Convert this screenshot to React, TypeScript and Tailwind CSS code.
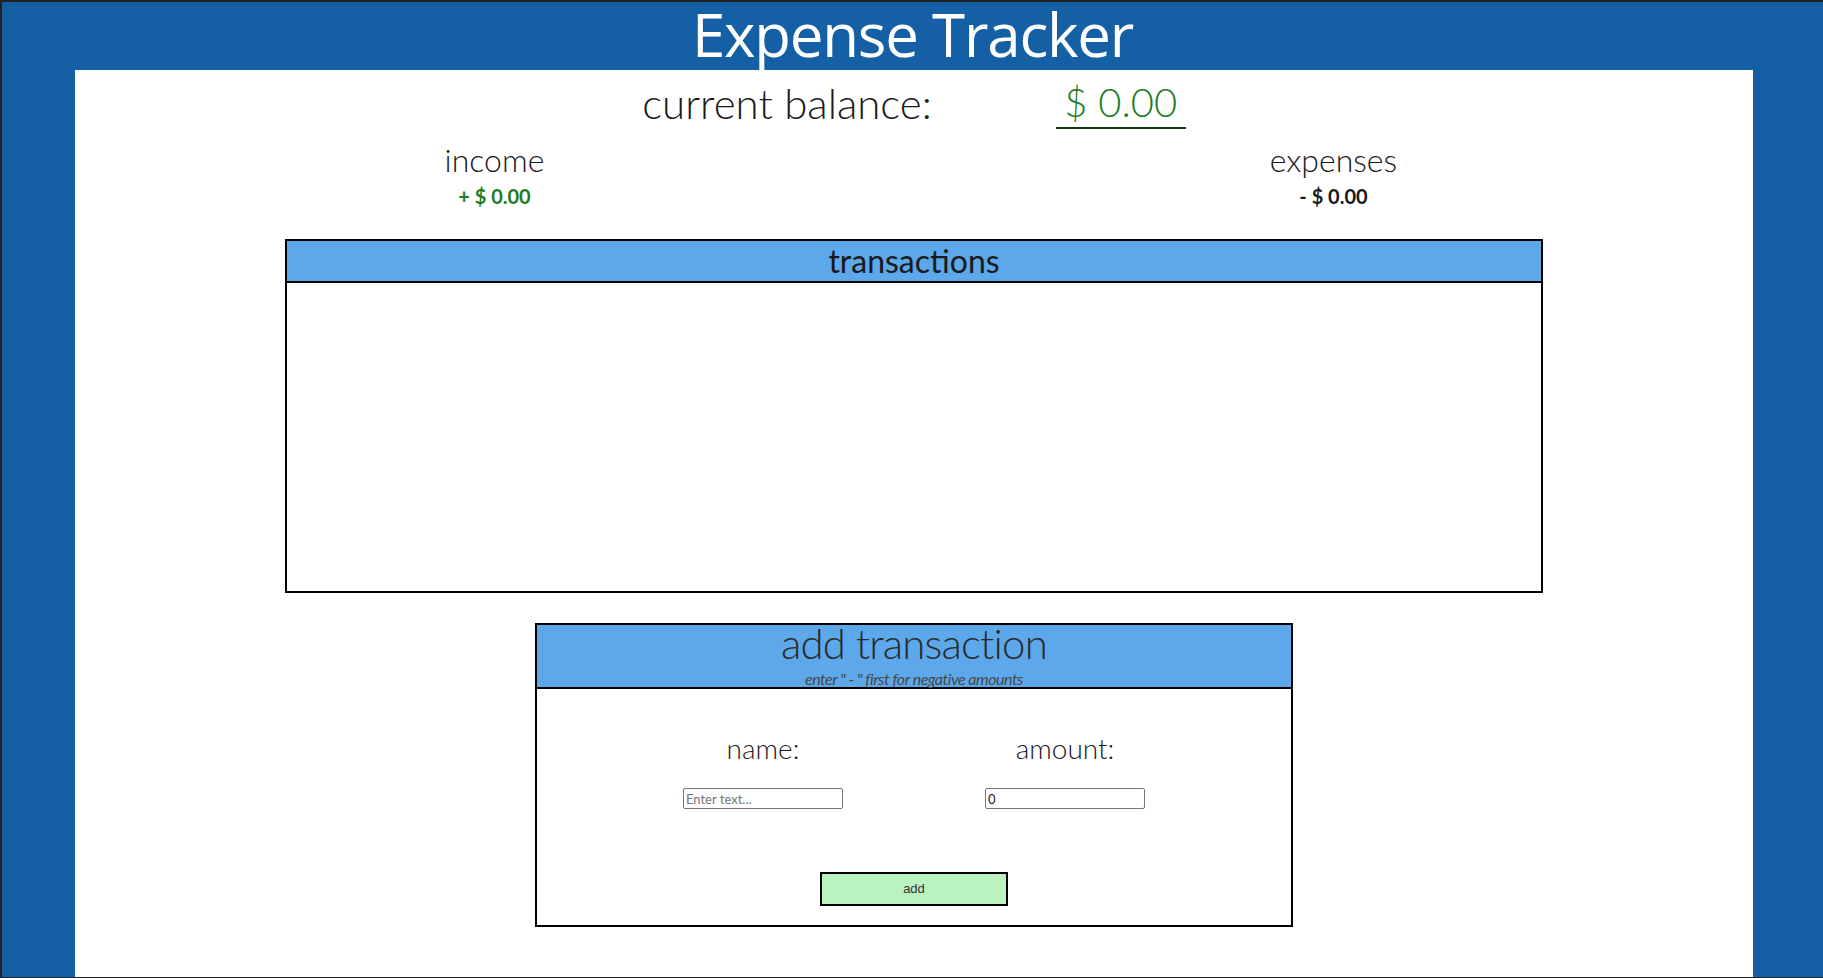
import { useState } from "react";

export default function App() {
  // form state for the add transaction panel
  const [name, setName] = useState("");
  const [amount, setAmount] = useState("0");

  return (
    <div className="h-[978px] flex flex-col bg-[#1560a4] border-t-2 border-l-2 border-b border-[#222222] overflow-hidden">
      {/* Title */}
      <h1 className="relative z-10 h-[68px] shrink-0 text-center text-white text-[60px] leading-[64px] tracking-[-0.02em] font-['Open_Sans',sans-serif]">
        Expense Tracker
      </h1>

      <main className="flex-1 bg-white ml-[73px] mr-[70px] pt-[12px] text-[#1a1a1a] font-['Lato',sans-serif]">
        {/* Balance */}
        <div className="flex justify-center items-start">
          <p className="text-[42px] leading-[42px] font-light">current balance:</p>
          <div className="ml-[124px] -mt-[1px] w-[130px] h-[48px] border-b-2 border-[#0b3d0b] text-center text-[40px] leading-[42px] font-light text-[#1d7d24]">
            $ 0.00
          </div>
        </div>

        {/* Income / Expenses */}
        <div className="grid grid-cols-2 mt-[15px]">
          <div className="flex flex-col items-center">
            <p className="text-[32px] leading-[32px] font-light">income</p>
            <p className="mt-[10px] text-[20px] leading-[20px] font-bold text-[#1d7d24]">+ $ 0.00</p>
          </div>
          <div className="flex flex-col items-center">
            <p className="text-[32px] leading-[32px] font-light">expenses</p>
            <p className="mt-[10px] text-[20px] leading-[20px] font-bold">- $ 0.00</p>
          </div>
        </div>

        {/* Transactions list */}
        <section className="w-3/4 mx-auto mt-[33px] h-[354px] border-2 border-black flex flex-col">
          <div className="h-[42px] border-b-2 border-black bg-[#5ca8ea] flex items-center justify-center">
            <h2 className="text-[32px] leading-[32px]">transactions</h2>
          </div>
          <ul className="flex-1"></ul>
        </section>

        {/* Add transaction */}
        <section className="w-[758px] mx-auto mt-[30px] h-[304px] border-2 border-black flex flex-col">
          <div className="h-[64px] border-b-2 border-black bg-[#5ca8ea] flex flex-col items-center">
            <h2 className="text-[42px] leading-[36px] font-light tracking-[-0.02em] text-[#2b2b2b]">
              add transaction
            </h2>
            <p className="mt-[10px] text-[16px] leading-[15px] italic tracking-[-0.03em] text-[#474747]">
              enter " - " first for negative amounts
            </p>
          </div>

          <div className="flex justify-center gap-[142px] pt-[45px]">
            <label className="w-[160px] flex flex-col items-center">
              <span className="text-[28px] leading-[28px] font-light">name:</span>
              <input
                type="text"
                value={name}
                onChange={(e) => setName(e.target.value)}
                placeholder="Enter text..."
                className="mt-[26px] w-[160px] h-[21px] px-[2px] border border-[#767676] rounded-[2px] text-[13px] text-[#1a1a1a] placeholder:text-[#757575]"
              />
            </label>
            <label className="w-[160px] flex flex-col items-center">
              <span className="text-[28px] leading-[28px] font-light">amount:</span>
              <input
                type="text"
                value={amount}
                onChange={(e) => setAmount(e.target.value)}
                className="mt-[26px] w-[160px] h-[21px] px-[2px] border border-[#767676] rounded-[2px] text-[13px] text-[#1a1a1a]"
              />
            </label>
          </div>

          <div className="flex justify-center mt-[63px]">
            <button className="w-[188px] h-[34px] bg-[#bbf3c0] border-2 border-black text-[13px] text-[#333333] font-['Liberation_Sans',sans-serif]">
              add
            </button>
          </div>
        </section>
      </main>
    </div>
  );
}
